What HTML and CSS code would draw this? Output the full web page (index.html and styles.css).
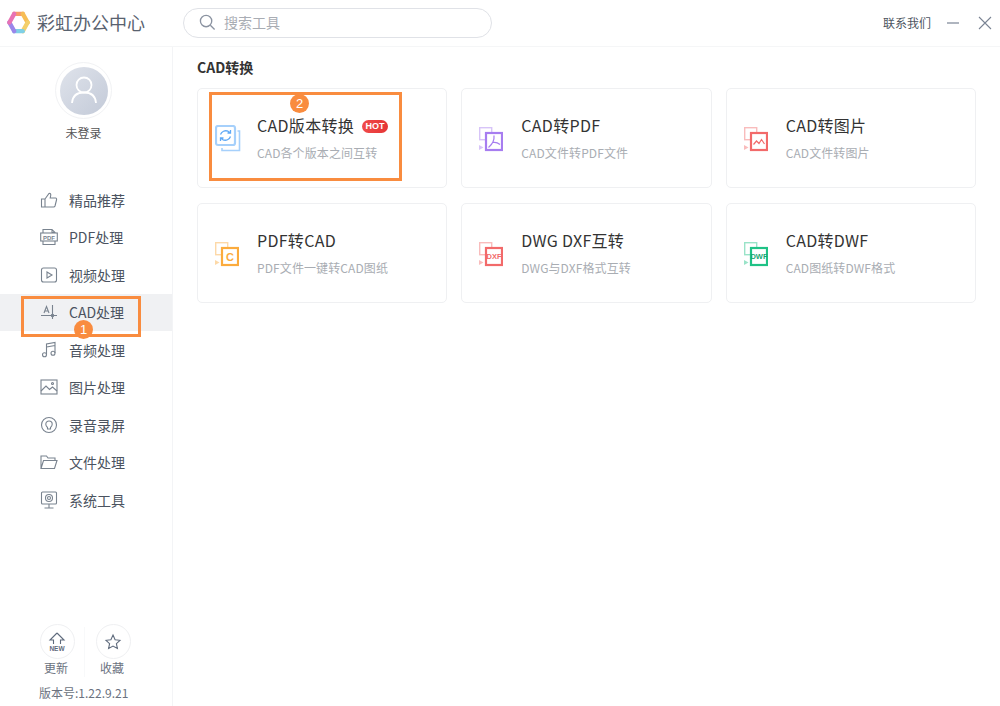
FILE: index.html
```html
<!DOCTYPE html>
<html lang="zh-CN">
  <head>
    <meta charset="UTF-8" />
    <title>彩虹办公中心</title>
    <link rel="stylesheet" href="styles.css">
  </head>

  <body>
    <div class="app">
      <header class="topbar">
        <div class="brand">
          <svg class="logo" viewBox="0 0 24 24" fill="none" stroke-width="4.500" stroke-linecap="round">
            <path d="M7.500 3H16.500" stroke="#f79a6a" />
            <path d="M16.500 3L21.500 12" stroke="#f7bd55" />
            <path d="M21.500 12L16.500 21" stroke="#f3cf6a" />
            <path d="M16.500 21H7.500" stroke="#7fd0e6" />
            <path d="M7.500 21L2.500 12" stroke="#9a86ea" />
            <path d="M2.500 12L7.500 3" stroke="#e873b4" />
          </svg>
          <span class="brand_name">彩虹办公中心</span>
        </div>
        <div class="search">
          <svg class="search_icon" viewBox="0 0 18 18" fill="none" stroke="#8b93a1" stroke-width="1.400">
            <circle cx="7.500" cy="7.500" r="6" />
            <path d="M12 12L16.500 16.500" />
          </svg>
          <span class="search_text">搜索工具</span>
        </div>
        <div class="top_right">
          <span class="contact">联系我们</span>
          <svg class="win_icon" viewBox="0 0 14 14" stroke="#7a8494" stroke-width="1.200"><path d="M1 7H13" /></svg>
          <svg class="win_icon" viewBox="0 0 14 14" stroke="#7a8494" stroke-width="1.100"><path d="M1 1L13 13M13 1L1 13" /></svg>
        </div>
      </header>

      <div class="body_row">
        <aside class="sidebar">
          <div class="user">
            <div class="avatar_ring">
              <div class="avatar">
                <svg viewBox="0 0 48 48" fill="none" stroke="#fff" stroke-width="1.800">
                  <circle cx="24" cy="18" r="7.500" />
                  <path d="M12 36C12.500 29 17 25.500 24 25.500C31 25.500 35.500 29 36 36" />
                </svg>
              </div>
            </div>
            <div class="user_name">未登录</div>
          </div>

          <nav class="nav">
            <div class="nav_item">
              <svg class="nav_icon" viewBox="0 0 18 18"><path d="M1.500 8H5V16H1.500ZM5 8L9 2.500C10.500 2 11 3.200 10.700 4.500L10.200 7H15.500C16.500 7 16.800 8 16.500 9L15 15C14.800 15.700 14.300 16 13.500 16H5" /></svg>
              <span>精品推荐</span>
            </div>
            <div class="nav_item">
              <svg class="nav_icon" viewBox="0 0 18 18"><path d="M3 5V1.500H12L15 4.500V5M3 13V16.500H15V13M12 1.500V4.500H15" /><rect x="0.700" y="5" width="16.600" height="8" /><text class="nav_pdf" x="9" y="11.500" text-anchor="middle">PDF</text></svg>
              <span>PDF处理</span>
            </div>
            <div class="nav_item">
              <svg class="nav_icon" viewBox="0 0 18 18"><rect x="1.500" y="2" width="15" height="14" rx="2" /><path d="M7 6L12 9L7 12Z" /></svg>
              <span>视频处理</span>
            </div>
            <div class="nav_item active">
              <svg class="nav_icon" viewBox="0 0 18 18"><path d="M1 12.500H17M12.500 2V16" /><path d="M4 10L6.500 3.500L9 10M5 8H8" /><circle class="dot" cx="12.500" cy="12.500" r="1.200" /></svg>
              <span>CAD处理</span>
              <div class="mark mark_nav"><b class="mark_num">1</b></div>
            </div>
            <div class="nav_item">
              <svg class="nav_icon" viewBox="0 0 18 18"><path d="M6.500 13.500V3L15 1.500V12M6.500 6L15 4.500" /><circle cx="4.500" cy="13.800" r="2" /><circle cx="13" cy="12.300" r="2" /></svg>
              <span>音频处理</span>
            </div>
            <div class="nav_item">
              <svg class="nav_icon" viewBox="0 0 18 18"><rect x="1" y="2" width="16" height="14" /><path d="M1 13L6 8L9.500 11.500L12.500 9L17 13" /><circle cx="12.500" cy="5.500" r="1" /></svg>
              <span>图片处理</span>
            </div>
            <div class="nav_item">
              <svg class="nav_icon" viewBox="0 0 18 18"><circle cx="9" cy="9" r="7.500" /><path d="M7.500 11.500C6.500 10.500 5.800 9.500 5.800 8.200C5.800 6.400 7.200 5 9 5C10.800 5 12.200 6.400 12.200 8.200C12.200 9.500 11.500 10.500 10.500 11.500V13H7.500Z" /></svg>
              <span>录音录屏</span>
            </div>
            <div class="nav_item">
              <svg class="nav_icon" viewBox="0 0 18 18"><path d="M1 15.500V3H6.500L8 5H15V7.500M1 15.500H14.500L17 7.500H3.500L1 15.500Z" /></svg>
              <span>文件处理</span>
            </div>
            <div class="nav_item">
              <svg class="nav_icon" viewBox="0 0 18 18"><rect x="1.500" y="1" width="15" height="12" rx="1" /><circle cx="9" cy="7" r="3.500" /><circle cx="9" cy="7" r="1.500" /><path d="M9 13V17M4.500 17H13.500" /></svg>
              <span>系统工具</span>
            </div>
          </nav>

          <div class="side_bottom">
            <div class="side_actions">
              <div class="side_action">
                <div class="round_btn">
                  <svg viewBox="0 0 22 22" fill="none" stroke="#5f6b7d" stroke-width="1.100">
                    <path d="M11 2L18 9H14.500V13M7.500 13V9H4L11 2" />
                    <text class="new_text" x="11" y="20" text-anchor="middle">NEW</text>
                  </svg>
                </div>
                <span class="action_label">更新</span>
              </div>
              <div class="side_divider"></div>
              <div class="side_action">
                <div class="round_btn">
                  <svg viewBox="0 0 22 22" fill="none" stroke="#5f6b7d" stroke-width="1.100">
                    <path d="M11 4L13.100 8.700L18 9.300L14.400 12.700L15.400 17.500L11 15.100L6.600 17.500L7.600 12.700L4 9.300L8.900 8.700Z" />
                  </svg>
                </div>
                <span class="action_label">收藏</span>
              </div>
            </div>
            <div class="version">版本号:1.22.9.21</div>
          </div>
        </aside>

        <main class="content">
          <h2 class="section_title">CAD转换</h2>
          <div class="card_grid">
            <div class="card">
              <svg class="card_icon blue" viewBox="0 0 26 27" fill="none">
                <path class="back" d="M22.500 6H24.500V25.500H7V23" />
                <rect class="front" x="1" y="1" width="19" height="19" rx="2" />
                <path class="thin" d="M5.500 9.500C6.500 6.500 10 5 13 6.200L15.500 8M15.500 5V8H12.500M15.500 11.500C14.500 14.500 11 16 8 14.800L5.500 13M5.500 16V13H8.500" />
              </svg>
              <div class="card_text">
                <div class="card_title">CAD版本转换<span class="hot">HOT</span></div>
                <div class="card_sub">CAD各个版本之间互转</div>
              </div>
              <div class="mark mark_card"><b class="mark_num">2</b></div>
            </div>

            <div class="card">
              <svg class="card_icon purple" viewBox="0 0 24 24" fill="none">
                <rect class="back" x="0.700" y="0.700" width="12" height="12" />
                <path class="tip" d="M0 18L4.500 20.500L0 23Z" />
                <rect class="front" x="7" y="6" width="16" height="17" fill="#fff" />
                <path class="thin" d="M15 8.500C15.500 13 13 17.500 9.500 20.500M14 15.500C16 15 18.500 15.500 21 17.500" />
              </svg>
              <div class="card_text">
                <div class="card_title">CAD转PDF</div>
                <div class="card_sub">CAD文件转PDF文件</div>
              </div>
            </div>

            <div class="card">
              <svg class="card_icon red" viewBox="0 0 24 24" fill="none">
                <rect class="back" x="0.700" y="0.700" width="12" height="12" />
                <path class="tip" d="M0 18L4.500 20.500L0 23Z" />
                <rect class="front" x="7" y="6" width="16" height="17" fill="#fff" />
                <path class="thin" d="M9.500 17.500L12.500 14L15 16.500L17.500 12.500L20.500 17" />
              </svg>
              <div class="card_text">
                <div class="card_title">CAD转图片</div>
                <div class="card_sub">CAD文件转图片</div>
              </div>
            </div>

            <div class="card">
              <svg class="card_icon orange" viewBox="0 0 24 24" fill="none">
                <rect class="back" x="0.700" y="0.700" width="12" height="12" />
                <path class="tip" d="M0 18L4.500 20.500L0 23Z" />
                <rect class="front" x="7" y="6" width="16" height="17" fill="#fff" />
                <text class="icon_c" x="15" y="19" text-anchor="middle">C</text>
              </svg>
              <div class="card_text">
                <div class="card_title">PDF转CAD</div>
                <div class="card_sub">PDF文件一键转CAD图纸</div>
              </div>
            </div>

            <div class="card">
              <svg class="card_icon red" viewBox="0 0 24 24" fill="none">
                <rect class="back" x="0.700" y="0.700" width="12" height="12" />
                <path class="tip" d="M0 18L4.500 20.500L0 23Z" />
                <rect class="front" x="7" y="6" width="16" height="17" fill="#fff" />
                <text class="icon_label" x="15" y="17.200" text-anchor="middle">DXF</text>
              </svg>
              <div class="card_text">
                <div class="card_title">DWG DXF互转</div>
                <div class="card_sub">DWG与DXF格式互转</div>
              </div>
            </div>

            <div class="card">
              <svg class="card_icon green" viewBox="0 0 24 24" fill="none">
                <rect class="back" x="0.700" y="0.700" width="12" height="12" />
                <path class="tip" d="M0 18L4.500 20.500L0 23Z" />
                <rect class="front" x="7" y="6" width="16" height="17" fill="#fff" />
                <text class="icon_label" x="15" y="17.200" text-anchor="middle">DWF</text>
              </svg>
              <div class="card_text">
                <div class="card_title">CAD转DWF</div>
                <div class="card_sub">CAD图纸转DWF格式</div>
              </div>
            </div>
          </div>
        </main>
      </div>
    </div>
  </body>
</html>
```

FILE: styles.css
```css
* {
  box-sizing: border-box;
}

html,
body {
  margin: 0;
  height: 100%;
  overflow: hidden;
}

body {
  background-color: #fff;
  color: #333;
  font-family: "Noto Sans CJK SC", "Noto Sans", sans-serif;
}

.app {
  display: flex;
  flex-direction: column;
  height: 706px;
}

.topbar {
  display: flex;
  align-items: center;
  height: 47px;
  padding: 0 8px 1px 7px;
  border-bottom: 1px solid #f5f6f7;
}

.brand {
  display: flex;
  align-items: center;
  gap: 7px;
  width: 176px;
}

.logo {
  width: 23px;
  height: 23px;
}

.brand_name {
  padding-bottom: 2px;
  font-size: 18px;
  line-height: 24px;
  color: #59626f;
}

.search {
  display: flex;
  align-items: center;
  gap: 8px;
  width: 309px;
  height: 30px;
  padding-left: 15px;
  border: 1px solid #e0e2e7;
  border-radius: 15px;
  font-size: 14px;
  color: #a9adb4;
}

.search_text {
  padding-bottom: 2px;
}

.search_icon {
  width: 17px;
  height: 17px;
}

.top_right {
  display: flex;
  align-items: center;
  margin-left: auto;
}

.contact {
  margin-right: 11px;
  font-size: 12px;
  color: #4d5561;
}

.win_icon {
  width: 14px;
  height: 14px;
  margin-left: 4px;
}

.win_icon + .win_icon {
  margin-left: 18px;
}

.body_row {
  display: flex;
  flex: 1;
  min-height: 0;
}

.sidebar {
  display: flex;
  flex-direction: column;
  width: 173px;
  border-right: 1px solid #f3f4f6;
}

.user {
  display: flex;
  flex-direction: column;
  align-items: center;
  padding-top: 15px;
  padding-right: 5px;
}

.avatar_ring {
  display: flex;
  align-items: center;
  justify-content: center;
  width: 57px;
  height: 57px;
  border: 1px solid #f1f2f4;
  border-radius: 50%;
}

.avatar {
  width: 48px;
  height: 48px;
  border-radius: 50%;
  background: linear-gradient(135deg, #dfe3eb, #c3cad8);
}

.avatar svg {
  display: block;
}

.user_name {
  margin-top: 5px;
  font-size: 12px;
  line-height: 18px;
  color: #555;
}

.nav {
  margin-top: 39px;
}

.nav_item {
  position: relative;
  display: flex;
  align-items: center;
  gap: 11px;
  height: 37.500px;
  padding-left: 40px;
  font-size: 14px;
  color: #4b5360;
}

.nav_item.active {
  background-color: #f0f1f3;
}

.nav_icon {
  width: 18px;
  height: 18px;
  fill: none;
  stroke: #79838f;
  stroke-width: 1.100;
}

.nav_icon .dot {
  fill: #79838f;
}

.nav_pdf {
  fill: #79838f;
  stroke: none;
  font-family: "Liberation Sans", sans-serif;
  font-size: 6px;
  font-weight: bold;
}

.mark {
  position: absolute;
  border: 3px solid #f98c3f;
  pointer-events: none;
}

.mark_num {
  position: absolute;
  display: flex;
  align-items: center;
  justify-content: center;
  width: 19px;
  height: 19px;
  border-radius: 50%;
  background-color: #f98c3f;
  color: #fff;
  font-family: "Liberation Sans", sans-serif;
  font-size: 13px;
  font-weight: normal;
  line-height: 19px;
}

.mark_nav {
  left: 21px;
  top: 2px;
  width: 120px;
  height: 41px;
}

.mark_nav .mark_num {
  left: 50px;
  top: 21px;
}

.mark_card {
  left: 11px;
  top: 3px;
  width: 193px;
  height: 89px;
}

.mark_card .mark_num {
  left: 78px;
  top: -1px;
}

.side_bottom {
  margin-top: auto;
  padding-bottom: 4px;
}

.side_actions {
  display: flex;
  padding-left: 39px;
}

.side_action {
  display: flex;
  flex-direction: column;
  align-items: center;
  width: 36px;
  font-size: 12px;
  line-height: 18px;
  color: #6b7280;
}

.action_label {
  margin-right: 2px;
}

.side_divider {
  width: 1px;
  margin: 3px 10px 0 9px;
  background-color: #f8f9fa;
}

.round_btn {
  display: flex;
  align-items: center;
  justify-content: center;
  width: 35px;
  height: 35px;
  border: 1px solid #eff0f2;
  border-radius: 50%;
}

.round_btn svg {
  width: 22px;
  height: 22px;
}

.new_text {
  fill: #5f6b7d;
  stroke: none;
  font-family: "Liberation Sans", sans-serif;
  font-size: 6.500px;
  font-weight: bold;
}

.version {
  margin-top: 7px;
  padding-left: 39px;
  font-size: 12px;
  line-height: 18px;
  color: #6b7280;
}

.content {
  flex: 1;
  min-width: 0;
  padding: 10px 24px 0 24px;
}

.section_title {
  margin: 0 0 11px;
  font-size: 14px;
  font-weight: bold;
  line-height: 20px;
  color: #333;
}

.card_grid {
  display: grid;
  grid-template-columns: repeat(3, 1fr);
  grid-auto-rows: 100px;
  gap: 15px 14px;
}

.card {
  position: relative;
  display: flex;
  align-items: flex-start;
  padding: 25px 0 0 17px;
  border: 1px solid #eff0f2;
  border-radius: 5px;
}

.card_icon {
  width: 24px;
  height: 26px;
  margin: 12px 18px 0 0;
  flex: none;
}

.card_icon.blue {
  width: 26px;
  height: 27px;
  margin: 11px 16px 0 0;
}

.card_icon .back {
  stroke-width: 1.400;
  opacity: 0.450;
}

.card_icon .tip {
  opacity: 0.450;
}

.card_icon .front {
  stroke-width: 2.200;
}

.card_icon .thin {
  stroke-width: 1.200;
}

.blue .back,
.blue .front {
  stroke: #a6d0fb;
}

.blue .thin {
  stroke: #5fa9f6;
  stroke-width: 1.300;
}

.blue .back {
  opacity: 1;
  stroke-width: 1.600;
}

.purple .back,
.purple .front,
.purple .thin {
  stroke: #a77df0;
}

.purple .tip {
  fill: #a77df0;
}

.red .back,
.red .front,
.red .thin {
  stroke: #f26a6a;
}

.red .tip {
  fill: #f26a6a;
}

.orange .back,
.orange .front {
  stroke: #fbab3d;
}

.orange .tip {
  fill: #fbab3d;
}

.green .back,
.green .front {
  stroke: #1fc286;
}

.green .tip {
  fill: #1fc286;
}

.icon_c {
  fill: #fbab3d;
  font-family: "Liberation Sans", sans-serif;
  font-size: 11px;
  font-weight: bold;
}

.icon_label {
  font-family: "Liberation Sans", sans-serif;
  font-size: 7.500px;
  font-weight: bold;
}

.red .icon_label {
  fill: #f26a6a;
}

.green .icon_label {
  fill: #17a873;
}

.card_title {
  display: flex;
  align-items: center;
  font-size: 16px;
  line-height: 22px;
  letter-spacing: 0.300px;
  color: #333;
}

.card_sub {
  margin-top: 8px;
  font-size: 12px;
  line-height: 18px;
  letter-spacing: 0.100px;
  color: #a9adb3;
}

.hot {
  margin-left: 8px;
  margin-top: 2px;
  width: 26px;
  height: 13px;
  border-radius: 7px;
  background: linear-gradient(90deg, #f04a4a, #e53535);
  color: #fff;
  font-family: "Liberation Sans", sans-serif;
  font-size: 9px;
  font-weight: bold;
  line-height: 13px;
  letter-spacing: 0;
  text-align: center;
}
```
